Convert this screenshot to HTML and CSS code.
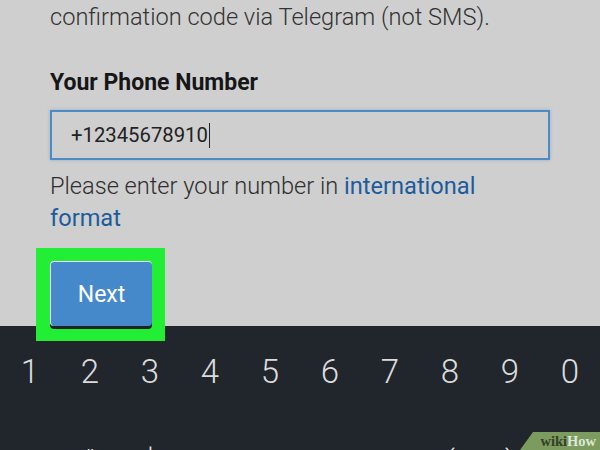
FILE: index.html
```html
<!DOCTYPE html>
<html>
<head>
<meta charset="utf-8">
<link rel="stylesheet" href="styles.css">
</head>
<body>
<div class="screen">
  <main class="form">
    <p class="intro">confirmation code via Telegram (not SMS).</p>
    <label class="label">Your Phone Number</label>
    <div class="input"><span class="value">+12345678910</span><span class="caret"></span></div>
    <p class="help">Please enter your number in <a class="link">international format</a></p>
    <div class="highlight"><button class="next">Next</button></div>
  </main>
  <section class="keyboard">
    <div class="row digits">
      <span>1</span><span>2</span><span>3</span><span>4</span><span>5</span><span>6</span><span>7</span><span>8</span><span>9</span><span>0</span>
    </div>
    <div class="row symbols">
      <span>@</span><span>"</span><span>$</span><span>%</span><span>&amp;</span><span>-</span><span>+</span><span>(</span><span>)</span>
    </div>
  </section>
  <div class="badge"><span class="wiki">wiki</span><span class="how">How</span></div>
</div>
</body>
</html>
```
FILE: styles.css
```css
html, body {
  margin: 0;
  padding: 0;
}
body {
  width: 600px;
  height: 450px;
  overflow: hidden;
  background: #cfcfcf;
  font-family: Roboto, "Liberation Sans", sans-serif;
}
.screen {
  position: relative;
  width: 600px;
  height: 450px;
  display: flex;
  flex-direction: column;
  overflow: hidden;
}
.form {
  flex-shrink: 0;
  height: 326px;
  padding: 0 50px;
  box-sizing: border-box;
  display: flex;
  flex-direction: column;
  align-items: flex-start;
  position: relative;
  z-index: 2;
}
.intro {
  margin: 0;
  margin-top: 2px;
  font-size: 23.6px;
  font-weight: 300;
  color: #333;
  line-height: 30px;
  white-space: nowrap;
}
.label {
  margin-top: 37px;
  font-size: 23px;
  font-weight: 700;
  color: #161616;
  line-height: 28px;
}
.input {
  margin-top: 13px;
  width: 500px;
  height: 50px;
  flex-shrink: 0;
  box-sizing: border-box;
  border: 2px solid #4d8bc4;
  box-shadow: 0 0 3px rgba(77, 139, 196, 0.5);
  display: flex;
  align-items: center;
  padding-left: 19px;
  font-size: 20.3px;
  color: #222;
}
.caret {
  width: 1.5px;
  height: 25px;
  background: #222;
  margin-left: 1px;
}
.help {
  margin: 10px 0 0 0;
  font-size: 23.6px;
  font-weight: 300;
  line-height: 32px;
  color: #2e2e2e;
  width: 440px;
}
.link {
  color: #1c5c9c;
  font-weight: 400;
}
.highlight {
  margin-top: 14px;
  margin-left: -14px;
  background: #21ee35;
  padding: 13px 13px 15px 14px;
  flex-shrink: 0;
}
.next {
  display: block;
  width: 102px;
  height: 65px;
  border: none;
  border-left: 1.5px solid #f2f6fa;
  border-top: 1.5px solid #f2f6fa;
  border-radius: 4px;
  background: #4689cb;
  box-shadow: 0 3px 0 #1c2226;
  color: #fff;
  font-family: Roboto, "Liberation Sans", sans-serif;
  font-size: 23px;
  padding: 0;
}
.keyboard {
  flex: 1;
  min-height: 0;
  background: #21262c;
  display: flex;
  flex-direction: column;
}
.row {
  display: grid;
  grid-template-columns: repeat(10, 60px);
  justify-items: center;
  color: #dcdcdc;
  flex-shrink: 0;
}
.digits {
  margin-top: 27px;
  font-size: 33px;
  font-weight: 300;
  line-height: 38px;
}
.symbols {
  margin-top: 52px;
  padding-left: 0;
  font-size: 30px;
  font-weight: 300;
  line-height: 36px;
  color: #e8e8e8;
}
.badge {
  position: absolute;
  right: 0;
  bottom: 0;
  width: 80px;
  height: 18px;
  background: #7c9b5f;
  clip-path: polygon(13px 0, 100% 0, 100% 100%, 0 100%);
  display: flex;
  align-items: center;
  justify-content: flex-end;
  padding-right: 4px;
  box-sizing: border-box;
  font-family: "Liberation Serif", serif;
  font-weight: 700;
  font-size: 14.5px;
  z-index: 3;
}
.wiki {
  color: #34402a;
}
.how {
  color: #dfe6d6;
}
```
